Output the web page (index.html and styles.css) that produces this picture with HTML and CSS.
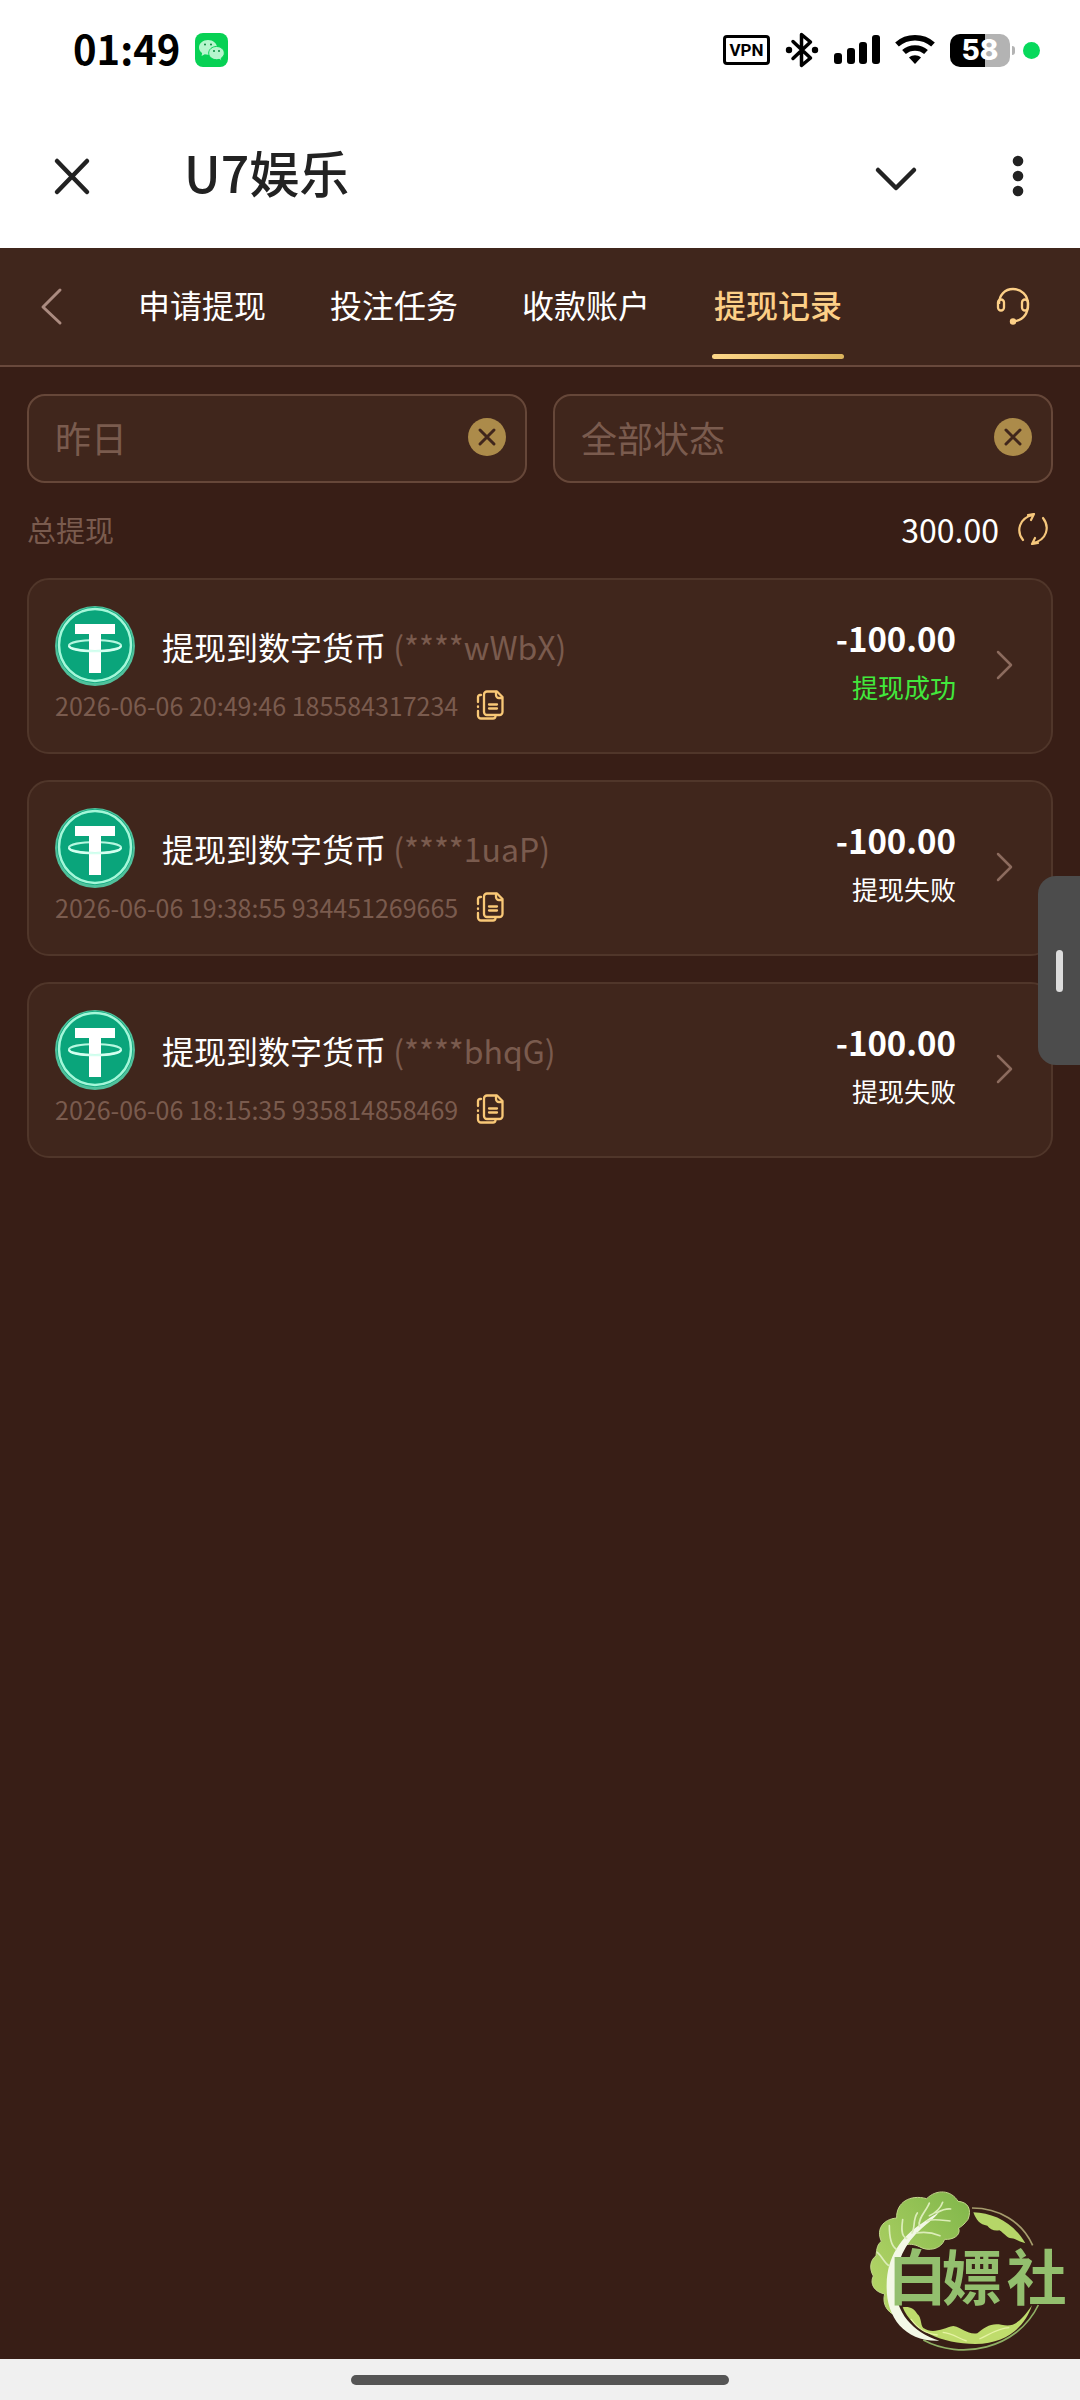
FILE: index.html
```html
<!DOCTYPE html>
<html lang="zh-CN">
<head>
<meta charset="utf-8">
<meta name="viewport" content="width=device-width, initial-scale=1">
<title>U7娱乐</title>
<link rel="stylesheet" href="styles.css">
</head>
<body>
<svg class="defs" aria-hidden="true">
  <defs>
    <symbol id="coin" viewBox="0 0 80 80">
      <circle cx="40" cy="40" r="40" fill="#4fc09b"/>
      <circle cx="40" cy="39" r="38" fill="#0aa57b"/>
      <circle cx="40" cy="39" r="36" fill="none" stroke="#a4f7d9" stroke-width="2.5"/>
      <path d="M20 18h40v10H46v39H34V28H20z" fill="#fff"/>
      <ellipse cx="40" cy="39.500" rx="26" ry="5.500" fill="none" stroke="#b5f7df" stroke-width="2.2"/>
      <path d="M34 28h12v12H34z" fill="#fff"/>
      <path d="M14 40c2 7 50 7 52 0" fill="none" stroke="#d5fff0" stroke-width="2.2"/>
    </symbol>
    <symbol id="copy" viewBox="0 0 28 30">
      <g fill="none" stroke="#f9c877" stroke-width="2.300" stroke-linecap="round" stroke-linejoin="round">
        <path d="M11 1.500h10l5.500 5.500v15a3 3 0 0 1-3 3H11a3 3 0 0 1-3-3V4.500a3 3 0 0 1 3-3z"/>
        <path d="M20 2v3a3 3 0 0 0 3 3h3M13 14.500h8M13 18.500h8"/>
        <path d="M5 5H4a2 2 0 0 0-2 2v5M2 16.500v.5M2 21v4.500a3 3 0 0 0 3 3h12a2.500 2.500 0 0 0 2.500-2"/>
      </g>
    </symbol>
    <symbol id="next" viewBox="0 0 20 32">
      <path d="M3 3l13 13L3 29" fill="none" stroke="#8c6b5e" stroke-width="2.5" stroke-linecap="round" stroke-linejoin="round"/>
    </symbol>
    <symbol id="clear" viewBox="0 0 38 38">
      <circle cx="19" cy="19" r="19" fill="#ac8b4a"/>
      <path d="M12 12l14 14M26 12L12 26" stroke="#40261c" stroke-width="3" stroke-linecap="round"/>
    </symbol>
  </defs>
</svg>

<div class="status">
  <div class="status-left">
    <span class="clock">01:49</span>
    <svg width="33" height="34" viewBox="0 0 33 34" aria-label="WeChat">
      <rect width="33" height="34" rx="8" fill="#07d154"/>
      <path d="M13 7c-5 0-9 3.200-9 7.500 0 2.300 1.200 4.200 3.100 5.500L6.600 23l3.200-1.700c1 .3 2 .4 3.200.4 5 0 9-3.200 9-7.300S18 7 13 7z" fill="#b6f6cd"/>
      <path d="M21.500 13.500c-4.400 0-7.800 2.900-7.800 6.600s3.400 6.600 7.800 6.600c.9 0 1.800-.1 2.600-.4l2.600 1.400-.5-2.500c1.900-1.200 3.100-3 3.100-5.100 0-3.700-3.400-6.600-7.800-6.600z" fill="#b6f6cd" stroke="#07d154"/>
      <g fill="#078a3c"><circle cx="10" cy="11.500" r="1"/><circle cx="16" cy="11.500" r="1"/><circle cx="19" cy="18" r="1"/><circle cx="24" cy="18" r="1"/></g>
    </svg>
  </div>
  <div class="status-right">
    <span class="vpn">VPN</span>
    <svg width="34" height="36" viewBox="0 0 34 36" aria-hidden="true">
      <path d="M8 9.500L25.500 26 16.500 33.500V2.500L25.500 10 8 26.500" fill="none" stroke="#000" stroke-width="3.500" stroke-linejoin="round" stroke-linecap="round"/>
      <circle cx="4" cy="18" r="3.200"/><circle cx="30" cy="18" r="3.200"/>
    </svg>
    <svg width="46" height="30" viewBox="0 0 46 30" aria-hidden="true">
      <rect x="0" y="18" width="8" height="11" rx="3"/><rect x="13" y="13" width="8" height="16" rx="3"/><rect x="25" y="7" width="8" height="22" rx="3"/><rect x="38" y="0" width="8" height="29" rx="3"/>
    </svg>
    <svg width="40" height="30" viewBox="0 0 40 30" aria-hidden="true">
      <g fill="none" stroke="#000" stroke-width="5.500"><path d="M2 9.500c10-9 26-9 36 0"/><path d="M9 17c6-5.500 16-5.500 22 0"/></g>
      <path d="M14 22.500c3.500-3 8.500-3 12 0L20 29z"/>
    </svg>
    <span class="battery"><span class="battery-body">58</span><span class="battery-tip"></span><span class="dot"></span></span>
  </div>
</div>

<header class="titlebar">
  <button class="icon-btn" aria-label="关闭">
    <svg width="40" height="40" viewBox="0 0 40 40"><path d="M5 5l30 31M35 5L5 36" stroke="#222" stroke-width="4.500" stroke-linecap="round"/></svg>
  </button>
  <h1>U7娱乐</h1>
  <button class="icon-btn" aria-label="收起">
    <svg width="44" height="40" viewBox="0 0 44 40"><path d="M4 14l18 18 18-18" fill="none" stroke="#222" stroke-width="4.500" stroke-linecap="round" stroke-linejoin="round"/></svg>
  </button>
  <button class="icon-btn more" aria-label="更多">
    <svg width="12" height="44" viewBox="0 0 12 44"><g fill="#222"><circle cx="6" cy="7" r="5.300"/><circle cx="6" cy="22" r="5.300"/><circle cx="6" cy="37" r="5.300"/></g></svg>
  </button>
</header>

<nav class="tabs">
  <button class="icon-btn back" aria-label="返回">
    <svg width="24" height="40" viewBox="0 0 24 40"><path d="M20 3L3 20l17 16" fill="none" stroke="#ab8b80" stroke-width="3" stroke-linecap="round" stroke-linejoin="round"/></svg>
  </button>
  <a class="tab" href="#">申请提现</a>
  <a class="tab" href="#">投注任务</a>
  <a class="tab" href="#">收款账户</a>
  <a class="tab active" href="#" aria-current="page">提现记录</a>
  <button class="icon-btn service" aria-label="客服">
    <svg width="34" height="40" viewBox="0 0 34 40"><g fill="none" stroke="#fccf87" stroke-width="2.300"><path d="M3 17C3 8 9 2 17 2s15 6 15 15c0 11-6 16.500-15 17.500"/><rect x="2" y="12.500" width="6" height="11" rx="3"/><rect x="26" y="12.500" width="6" height="11" rx="3"/></g><circle cx="17" cy="34.500" r="3.200" fill="#fccf87"/></svg>
  </button>
</nav>

<main class="content">
  <div class="filters">
    <div class="filter">
      <input type="text" aria-label="日期" placeholder="昨日" readonly>
      <button class="icon-btn" aria-label="清除日期"><svg width="38" height="38"><use href="#clear"/></svg></button>
    </div>
    <div class="filter">
      <input type="text" aria-label="状态" placeholder="全部状态" readonly>
      <button class="icon-btn" aria-label="清除状态"><svg width="38" height="38"><use href="#clear"/></svg></button>
    </div>
  </div>

  <div class="total">
    <span class="total-label">总提现</span>
    <span class="total-value">300.00</span>
    <button class="icon-btn" aria-label="刷新">
      <svg width="32" height="32" viewBox="0 0 32 32"><g fill="none" stroke="#f6c77c" stroke-width="2.200" stroke-linecap="round" stroke-linejoin="round"><path d="M6 27C-1 18 2 5 16 2M11 2l6-1-3 6"/><path d="M26 5c7 9 4 22-10 25M21 30l-6 1 3-6"/></g></svg>
    </button>
  </div>

  <ul class="records">
    <li class="record">
      <div class="info">
        <div class="name"><svg width="80" height="80" aria-hidden="true"><use href="#coin"/></svg><span>提现到数字货币 <span class="account">(****wWbX)</span></span></div>
        <div class="meta"><span>2026-06-06 20:49:46 185584317234</span><button class="icon-btn" aria-label="复制"><svg width="28" height="30"><use href="#copy"/></svg></button></div>
      </div>
      <div class="result"><span class="amount">-100.00</span><span class="state ok">提现成功</span></div>
      <svg class="next" width="20" height="32" aria-hidden="true"><use href="#next"/></svg>
    </li>
    <li class="record">
      <div class="info">
        <div class="name"><svg width="80" height="80" aria-hidden="true"><use href="#coin"/></svg><span>提现到数字货币 <span class="account">(****1uaP)</span></span></div>
        <div class="meta"><span>2026-06-06 19:38:55 934451269665</span><button class="icon-btn" aria-label="复制"><svg width="28" height="30"><use href="#copy"/></svg></button></div>
      </div>
      <div class="result"><span class="amount">-100.00</span><span class="state">提现失败</span></div>
      <svg class="next" width="20" height="32" aria-hidden="true"><use href="#next"/></svg>
    </li>
    <li class="record">
      <div class="info">
        <div class="name"><svg width="80" height="80" aria-hidden="true"><use href="#coin"/></svg><span>提现到数字货币 <span class="account">(****bhqG)</span></span></div>
        <div class="meta"><span>2026-06-06 18:15:35 935814858469</span><button class="icon-btn" aria-label="复制"><svg width="28" height="30"><use href="#copy"/></svg></button></div>
      </div>
      <div class="result"><span class="amount">-100.00</span><span class="state">提现失败</span></div>
      <svg class="next" width="20" height="32" aria-hidden="true"><use href="#next"/></svg>
    </li>
  </ul>

  <svg class="badge" width="210" height="170" viewBox="80 90 630 510" role="img" aria-label="白嫖社">
    <defs>
      <linearGradient id="leaf" x1="0" y1="1" x2="1" y2="0"><stop offset="0" stop-color="#b9d86a"/><stop offset="1" stop-color="#80b64a"/></linearGradient>
    </defs>
    <path d="M398 147c80 0 150 40 182 112" fill="none" stroke="#a59c6c" stroke-width="5"/>
    <path d="M252 543c110 60 280 30 345-105" fill="none" stroke="#8fb065" stroke-width="5"/>
    <path d="M402 160c60 2 120 30 156 93-20-5-28-14-42-15-12 0-22-16-36-24-16 3-28-3-36-14-22-2-34-18-42-40z" fill="#b6d668"/>
    <path d="M190 445c20-4 35 4 44 20 14 12 8 30 18 42 30 20 60 0 90-6 30 6 40 26 72 22 22-18 40-32 72-26 30 6 50 4 92-58-20 60-70 115-170 116-100 0-190-40-218-110z" fill="#bfdc6c"/>
    <path d="M215 480c20 30 50 45 80 48M310 520c30 2 50 20 72 26M420 540c30-14 60-34 90-34" fill="none" stroke="#e6f3a4" stroke-width="4"/>
    <path d="M160 465c-24-14-30-40-24-60-30-6-46-30-34-54-14-24-8-50 8-60 2-26 6-36 16-44-16-36 4-66 46-70-2-46 40-72 90-58 30-30 74-26 94 8 30 2 42 24 30 54-12 16-20 22-28 26 8 24-20 36-42 34-10 30-50 38-76 22-34-16-60-4-72 24-26 60-20 120-8 178z" fill="url(#leaf)" stroke="#c2d88a" stroke-width="3"/>
    <path d="M300 545c-104 4-162-72-158-170 2-80 40-140 108-184 20-14 34-24 48-30-14 18-34 32-52 48-50 44-76 100-78 170 0 80 50 140 132 166z" fill="#f3f8e6"/>
    <path d="M262 186c20-8 48-2 70 0M240 202c-6-24 24-50 30-70M218 222c10-16 2-40 16-60M202 238c-20-6-14-40-12-56M170 270c-14-10-20-30-20-70M150 320c-14-6-20-26-36-40M232 222c30-6 50 0 70 8M270 170c20-8 36-26 40-40M290 162c16-8 26-14 44-12" fill="none" stroke="#dcedb9" stroke-width="5" stroke-linecap="round"/>
    <g class="badge-text"><text x="144" y="424">白</text><text x="308" y="424">嫖</text><text x="502" y="424">社</text></g>
  </svg>
</main>

<aside class="edge-handle"><span></span></aside>
<footer class="gesture"><span></span></footer>
</body>
</html>
```
FILE: styles.css
```css
* {
  box-sizing: border-box;
}

body {
  margin: 0;
  min-height: 100vh;
  display: flex;
  flex-direction: column;
  background: #381e16;
  color: #fff;
  font-family: "Noto Sans CJK SC", "Noto Sans", sans-serif;
}

svg {
  display: block;
  flex: none;
}

.defs {
  position: absolute;
  width: 0;
  height: 0;
}

.icon-btn {
  flex: none;
  padding: 0;
  border: 0;
  background: none;
  cursor: pointer;
}

/* System status bar */
.status {
  display: flex;
  justify-content: space-between;
  align-items: center;
  height: 100px;
  padding: 0 40px 0 73px;
  background: #fff;
  color: #000;
}

.status-left,
.status-right {
  display: flex;
  align-items: center;
}

.status-left {
  gap: 15px;
}

.clock {
  padding-bottom: 4px;
  font-size: 40px;
  line-height: 48px;
  font-weight: 700;
}

.status-right {
  gap: 15px;
}

.vpn {
  width: 47px;
  height: 30px;
  border: 3px solid #000;
  border-radius: 4px;
  font: 700 17px/24px Roboto, sans-serif;
  text-align: center;
}

.battery {
  display: flex;
  align-items: center;
  gap: 2px;
}

.battery-body {
  width: 60px;
  height: 33px;
  border-radius: 10px;
  background: linear-gradient(90deg, #000 58%, #b3b3b3 58%);
  color: #fff;
  font: 800 28px/33px Inter, sans-serif;
  text-align: center;
}

.battery-tip {
  width: 3px;
  height: 9px;
  border-radius: 0 3px 3px 0;
  background: #b3b3b3;
}

.dot {
  width: 17px;
  height: 17px;
  margin-left: 6px;
  border-radius: 50%;
  background: #07d95c;
}

/* Browser title bar */
.titlebar {
  display: flex;
  align-items: center;
  height: 148px;
  padding: 4px 56px 0 52px;
  background: #fff;
  color: #222;
}

.titlebar h1 {
  flex: 1;
  margin: 0 0 0 92px;
  padding-bottom: 10px;
  font-size: 50px;
  line-height: 60px;
  font-weight: 500;
}

.more {
  margin-left: 94px;
}

/* Section tabs */
.tabs {
  display: flex;
  align-items: center;
  height: 119px;
  padding: 0 50px 0 40px;
  border-bottom: 2px solid #69493c;
  background: #40261c;
}

.back {
  margin-right: 42px;
}

.tab {
  height: 100%;
  margin: 0 30px;
  padding: 0 2px;
  color: #fff;
  font-size: 32px;
  line-height: 112px;
  text-decoration: none;
  white-space: nowrap;
}

.tab.active {
  position: relative;
  color: #fccf87;
  font-weight: 500;
}

.tab.active::after {
  content: "";
  position: absolute;
  right: 0;
  bottom: 6px;
  left: 0;
  height: 5px;
  border-radius: 3px;
  background: linear-gradient(90deg, #fed789, #dbb35c);
}

.service {
  margin-left: auto;
}

/* Page content */
.content {
  position: relative;
  flex: 1;
  padding: 27px;
}

.filters {
  display: grid;
  grid-template-columns: 1fr 1fr;
  gap: 26px;
}

.filter {
  display: flex;
  align-items: center;
  height: 89px;
  padding: 0 19px 4px 26px;
  border: 2px solid #664739;
  border-radius: 18px;
  background: #40261c;
}

.filter input {
  flex: 1;
  min-width: 0;
  padding: 0;
  border: 0;
  outline: 0;
  background: none;
  font-family: inherit;
  font-size: 36px;
  line-height: 48px;
}

.filter input::placeholder {
  color: #7a5b4e;
  opacity: 1;
}

.total {
  display: flex;
  align-items: center;
  height: 95px;
  padding-bottom: 4px;
}

.total-label {
  flex: 1;
  color: #7a5b4e;
  font-size: 29px;
}

.total-value {
  margin-right: 18px;
  font-size: 32px;
}

.total .icon-btn {
  margin-right: 4px;
}

.records {
  display: grid;
  gap: 26px;
  margin: 0;
  padding: 0;
  list-style: none;
}

.record {
  display: flex;
  align-items: flex-start;
  padding: 26px 36px 28px 26px;
  border: 2px solid #50362a;
  border-radius: 22px;
  background: #40261c;
}

.info {
  flex: 1;
}

.name {
  display: flex;
  align-items: center;
  gap: 27px;
  font-size: 32px;
  line-height: 48px;
}

.account {
  color: #7a5b4e;
}

.meta {
  display: flex;
  align-items: center;
  gap: 18px;
  height: 38px;
  color: #7a5b4e;
  font-size: 25px;
  line-height: 38px;
}

.result {
  display: flex;
  flex-direction: column;
  align-items: flex-end;
  gap: 10px;
  padding-top: 12px;
}

.amount {
  font-size: 33px;
  line-height: 40px;
  font-weight: 700;
}

.state {
  font-size: 26px;
  line-height: 38px;
}

.ok {
  color: #42e83c;
}

.next {
  align-self: center;
  margin-left: 39px;
}

.badge {
  position: absolute;
  right: 4px;
  bottom: 0;
}

.badge-text {
  fill: #93bf6e;
  font-size: 180px;
  font-weight: 700;
}

/* Floating side panel handle */
.edge-handle {
  position: fixed;
  top: 876px;
  right: 0;
  display: flex;
  align-items: center;
  width: 42px;
  height: 189px;
  padding-left: 18px;
  border-radius: 18px 0 0 18px;
  background: #4c4c4c;
}

.edge-handle span {
  width: 7px;
  height: 42px;
  border-radius: 4px;
  background: #dcdcdc;
}

.gesture {
  display: flex;
  justify-content: center;
  align-items: center;
  height: 41px;
  background: #f0f0f0;
}

.gesture span {
  width: 35%;
  height: 10px;
  border-radius: 5px;
  background: #555;
}
```
